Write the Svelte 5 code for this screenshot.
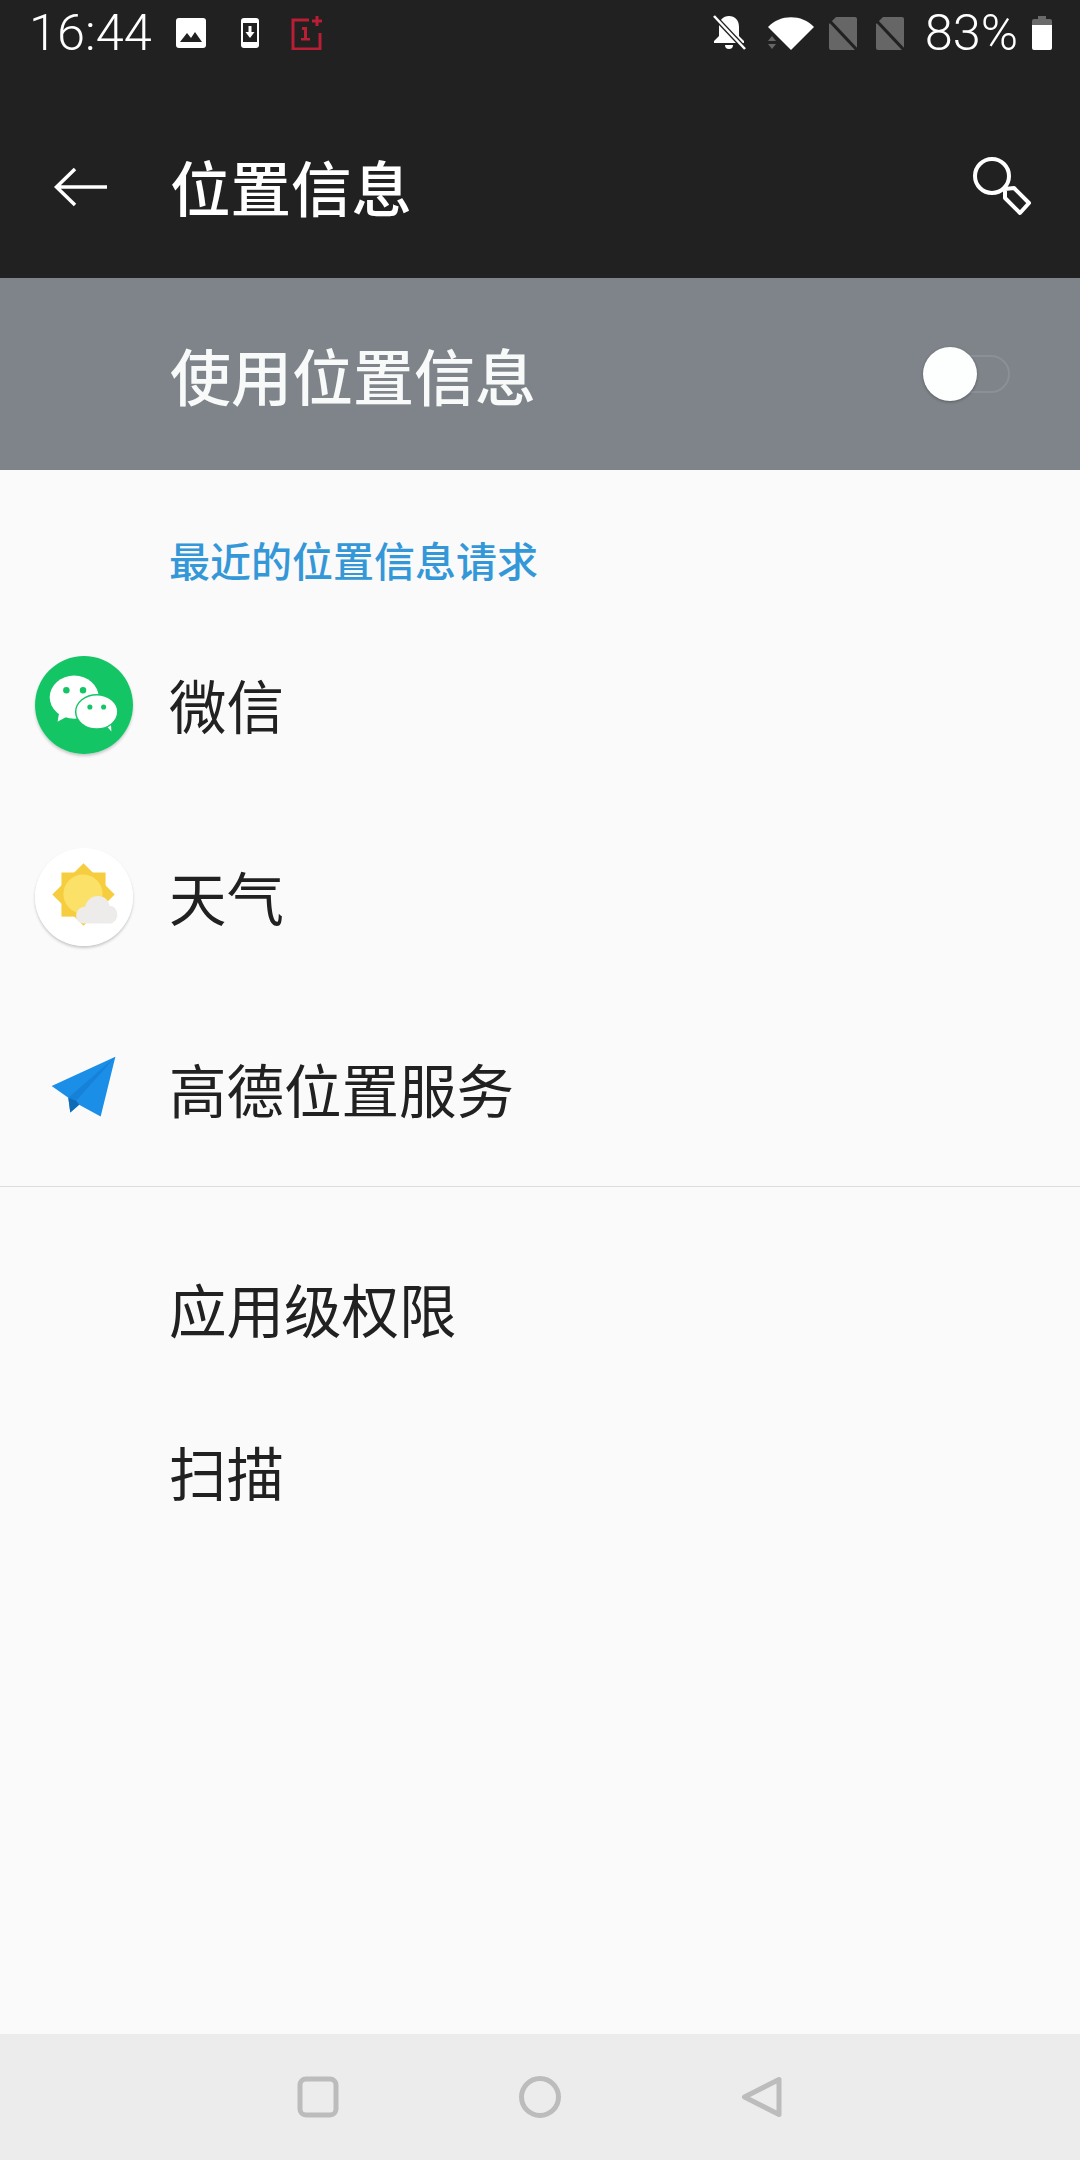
<script lang="ts">
  const recent = ['微信', '天气', '高德位置服务'];
</script>

<div class="screen">
  <header class="top">
    <div class="status">
      <span class="time">16:44</span>
      <svg class="st-image" viewBox="0 0 30 30"><rect width="30" height="30" rx="3" fill="#fff"/><path d="M4 24l7-9 4 5 4-6 7 10z" fill="#212121"/></svg>
      <svg class="st-dl" viewBox="0 0 18 30"><rect width="18" height="30" rx="3" fill="#fff"/><rect x="2" y="5" width="14" height="19" fill="#212121"/><path d="M7.500 8h3v6h3L9 20l-4.500-6h3z" fill="#fff"/></svg>
      <svg class="st-one" viewBox="0 0 34 34"><path d="M19 4H3v29h27V17M22 5h10M27 0v10" fill="none" stroke="#b81f35" stroke-width="3"/><path d="M12 11h5v11h-3v-8h-2zM11 22h9v2.500h-9z" fill="#b81f35"/></svg>
      <span class="spacer"></span>
      <svg class="st-bell" viewBox="0 0 36 36"><path d="M18 1c6 0 10 4 10 11v9l5 5v2H3v-2l5-5v-9C8 5 12 1 18 1zM14 30h8a4 4 0 0 1-8 0z" fill="#fff"/><path d="M2 0l32 34" stroke="#212121" stroke-width="5"/><path d="M3 1l31 33" stroke="#fff" stroke-width="2.500"/></svg>
      <svg class="st-wifi" viewBox="0 0 48 34"><path d="M1 11C13-2 35-2 47 11L24 34z" fill="#fff"/><path d="M0 24l4-5 4 5zM0 27h8l-4 5z" fill="#666" transform="translate(1 1)"/></svg>
      <svg class="st-sim" viewBox="0 0 32 34"><path d="M10 1h19a2 2 0 0 1 2 2v29a2 2 0 0 1-2 2H5a2 2 0 0 1-2-2V8z" fill="#666"/><path d="M0 1l31 33" stroke="#212121" stroke-width="3"/></svg>
      <svg class="st-sim" viewBox="0 0 32 34"><path d="M10 1h19a2 2 0 0 1 2 2v29a2 2 0 0 1-2 2H5a2 2 0 0 1-2-2V8z" fill="#666"/><path d="M0 1l31 33" stroke="#212121" stroke-width="3"/></svg>
      <span class="pct">83%</span>
      <svg class="st-bat" viewBox="0 0 20 34"><path d="M6 0h8v3h4a2 2 0 0 1 2 2v4H0V5a2 2 0 0 1 2-2h4z" fill="#6a6a6a"/><path d="M0 9h20v23a2 2 0 0 1-2 2H2a2 2 0 0 1-2-2z" fill="#fff"/></svg>
    </div>
    <div class="toolbar">
      <svg class="back" viewBox="0 0 54 40"><path d="M53 20H3M21 2L2.500 20 21 38" fill="none" stroke="#fff" stroke-width="3.500"/></svg>
      <h1>位置信息</h1>
      <svg class="search" viewBox="0 0 60 60"><circle cx="20" cy="20" r="17" fill="none" stroke="#fff" stroke-width="4"/><path d="M33 33l9-1 15 15-9 10-15-15z" fill="none" stroke="#fff" stroke-width="4" stroke-linejoin="round"/></svg>
    </div>
  </header>

  <div class="master">
    <span class="master-label">使用位置信息</span>
    <span class="switch"><span class="track"></span><span class="thumb"></span></span>
  </div>

  <main class="list">
    <div class="section">最近的位置信息请求</div>

    {#each recent as name, i}
      <div class="row">
        <span class="app-icon" class:round={i < 2}>
          {#if i === 0}
            <svg viewBox="0 0 100 100">
              <circle cx="50" cy="50" r="50" fill="#14c566"/>
              <ellipse cx="40" cy="42" rx="25" ry="22" fill="#fff"/>
              <path d="M25 56l-2 11 13-7z" fill="#fff"/>
              <path d="M70 68l8 9-1-14z" fill="#fff"/>
              <ellipse cx="63" cy="57" rx="21.500" ry="17.500" fill="#fff" stroke="#14c566" stroke-width="1.500"/>
              <circle cx="32" cy="35" r="3.300" fill="#14c566"/><circle cx="49" cy="35" r="3.300" fill="#14c566"/>
              <circle cx="56" cy="52" r="2.600" fill="#14c566"/><circle cx="70" cy="52" r="2.600" fill="#14c566"/>
            </svg>
          {:else if i === 1}
            <svg viewBox="0 0 100 100">
              <circle cx="50" cy="50" r="50" fill="#fff"/>
              <rect x="27" y="25" width="45" height="45" fill="#f6cd3e"/>
              <rect x="27" y="25" width="45" height="45" fill="#f6cd3e" transform="rotate(45 49.500 47.500)"/>
              <circle cx="49" cy="47" r="20" fill="#fbe168"/>
              <path d="M42 69c0-5 4-9 9-9 2-7 7-11 13-11 7 0 11 4 12 10 4 0 8 3 8 9 0 5-4 9-8 9H50c-5 0-8-3-8-8z" fill="#edecea"/>
            </svg>
          {:else}
            <svg viewBox="0 0 100 100">
              <path d="M82 17L17 47l17 12 2 15 9-8 22 12z" fill="#1b8ee8"/>
              <path d="M82 17L34 59l8 3z" fill="#1681d8"/>
              <path d="M34 59l2 15 9-8-3-4z" fill="#0f6cb4"/>
            </svg>
          {/if}
        </span>
        <span class="row-text">{name}</span>
      </div>
    {/each}

    <div class="divider"></div>

    <div class="row plain first"><span class="row-text">应用级权限</span></div>
    <div class="row plain"><span class="row-text">扫描</span></div>
  </main>

  <nav class="nav">
    <svg viewBox="0 0 42 42"><rect x="3" y="3" width="36" height="36" rx="6" fill="none" stroke="#bcbcbc" stroke-width="5"/></svg>
    <svg viewBox="0 0 42 42"><circle cx="21" cy="21" r="18.500" fill="none" stroke="#bcbcbc" stroke-width="5"/></svg>
    <svg viewBox="0 0 42 42"><path d="M38 3.500v35L3.500 21z" fill="none" stroke="#bcbcbc" stroke-width="5" stroke-linejoin="round"/></svg>
  </nav>
</div>

<style>
  :global(body) {
    margin: 0;
  }

  .screen {
    width: 1080px;
    height: 2160px;
    display: flex;
    flex-direction: column;
    background: #fafafa;
    font-family: "Noto Sans CJK SC", "Noto Sans", sans-serif;
    color: #212121;
    overflow: hidden;
  }

  .top {
    background: #212121;
    color: #fff;
    height: 278px;
  }

  /* Status bar */
  .status {
    height: 66px;
    display: flex;
    align-items: center;
    padding: 0 28px 0 29px;
  }

  .time,
  .pct {
    font-family: Roboto, sans-serif;
    font-weight: 300;
    font-size: 50.500px;
    line-height: 1;
  }

  .status svg {
    flex: none;
  }

  .st-image {
    width: 30px;
    height: 30px;
    margin-left: 24px;
  }

  .st-dl {
    width: 18px;
    height: 30px;
    margin-left: 35px;
  }

  .st-one {
    width: 34px;
    height: 34px;
    margin-left: 31px;
  }

  .spacer {
    flex: 1;
  }

  .st-bell {
    width: 36px;
    height: 36px;
  }

  .st-wifi {
    width: 48px;
    height: 34px;
    margin-left: 20px;
  }

  .st-sim {
    width: 32px;
    height: 34px;
    margin-left: 11px;
  }

  .st-sim + .st-sim {
    margin-left: 15px;
  }

  .pct {
    margin-left: 20px;
  }

  .st-bat {
    width: 20px;
    height: 34px;
    margin-left: 14px;
  }

  /* Toolbar */
  .toolbar {
    height: 212px;
    box-sizing: border-box;
    padding: 28px 48px 0 54px;
    display: flex;
    align-items: center;
  }

  .back {
    width: 54px;
    height: 40px;
    margin-top: 2px;
  }

  h1 {
    margin: 0 0 0 62px;
    font-size: 60.500px;
    font-weight: 500;
    line-height: 1;
    flex: 1;
  }

  .search {
    width: 60px;
    height: 60px;
  }

  /* Master switch */
  .master {
    height: 192px;
    background: #7e848a;
    display: flex;
    align-items: center;
    padding: 0 70px 0 170px;
  }

  .master-label {
    flex: 1;
    color: #f8fafa;
    font-size: 61px;
    font-weight: 500;
    line-height: 1;
  }

  .switch {
    position: relative;
    width: 87px;
    height: 54px;
    display: block;
  }

  .track {
    position: absolute;
    left: 24px;
    right: 0;
    top: 8px;
    height: 38px;
    box-sizing: border-box;
    border: 2px solid #8c9096;
    border-radius: 19px;
  }

  .thumb {
    position: absolute;
    left: 0;
    top: 0;
    width: 54px;
    height: 54px;
    border-radius: 50%;
    background: #fdfefe;
    box-shadow: 0 1px 3px rgba(0, 0, 0, 0.3);
  }

  /* List */
  .list {
    flex: 1;
  }

  .section {
    margin: 62px 0 23px 169px;
    height: 54px;
    font-size: 41px;
    line-height: 54px;
    font-weight: 500;
    color: #3498d8;
  }

  .row {
    height: 192px;
    display: flex;
    align-items: center;
    padding-left: 35px;
  }

  .app-icon {
    width: 98px;
    height: 98px;
    margin-right: 36px;
    flex: none;
  }

  .round {
    border-radius: 50%;
    box-shadow: 0 2px 3px rgba(0, 0, 0, 0.2);
  }

  .app-icon svg {
    width: 98px;
    height: 98px;
    display: block;
  }

  .row-text {
    font-size: 57.500px;
    line-height: 1;
    color: #212121;
  }

  .divider {
    height: 1px;
    margin-top: 1px;
    background: #dcdcdc;
  }

  .plain {
    height: 163px;
    padding-left: 169px;
  }

  .first {
    margin-top: 40px;
  }

  /* Navigation bar */
  .nav {
    height: 126px;
    background: #ececec;
    display: flex;
    align-items: center;
    justify-content: center;
    gap: 180px;
  }

  .nav svg {
    width: 42px;
    height: 42px;
  }
</style>
